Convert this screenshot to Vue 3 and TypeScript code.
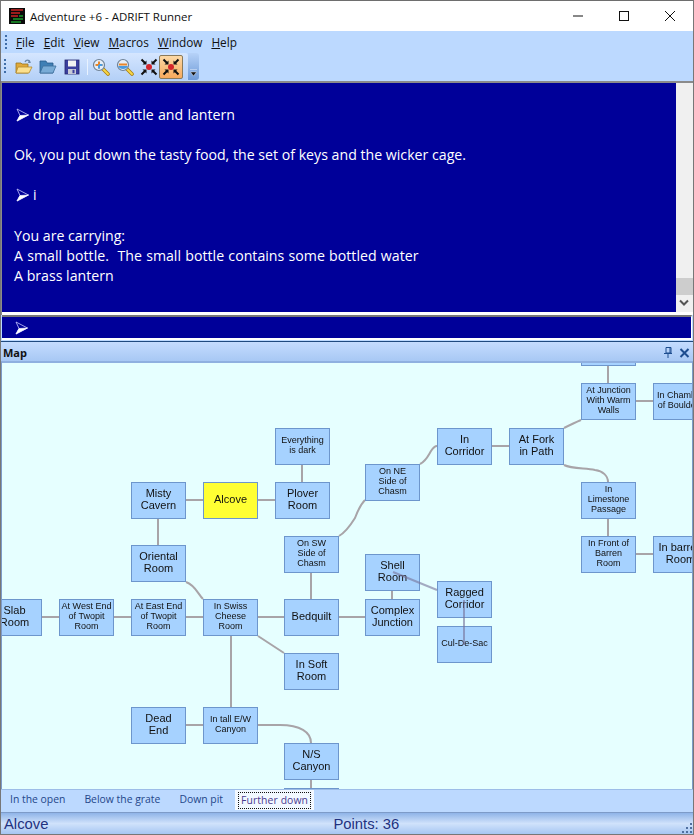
<script setup lang="ts">
interface RoomNode { x: number; y: number; t: string[]; s?: boolean; a?: boolean }
const rooms: RoomNode[] = [
  { x: 581, y: 329, t: [''] },
  { x: 581, y: 383, t: ['At Junction', 'With Warm', 'Walls'], s: true },
  { x: 653, y: 383, t: ['In Chamber', 'of Boulders'], s: true },
  { x: 275, y: 428, t: ['Everything', 'is dark'], s: true },
  { x: 437, y: 428, t: ['In', 'Corridor'] },
  { x: 509, y: 428, t: ['At Fork', 'in Path'] },
  { x: 365, y: 464, t: ['On NE', 'Side of', 'Chasm'], s: true },
  { x: 131, y: 482, t: ['Misty', 'Cavern'] },
  { x: 203, y: 482, t: ['Alcove'], a: true },
  { x: 275, y: 482, t: ['Plover', 'Room'] },
  { x: 581, y: 482, t: ['In', 'Limestone', 'Passage'], s: true },
  { x: 284, y: 536, t: ['On SW', 'Side of', 'Chasm'], s: true },
  { x: 581, y: 536, t: ['In Front of', 'Barren', 'Room'], s: true },
  { x: 653, y: 536, t: ['In barren', 'Room'] },
  { x: 131, y: 545, t: ['Oriental', 'Room'] },
  { x: 365, y: 554, t: ['Shell', 'Room'] },
  { x: 437, y: 581, t: ['Ragged', 'Corridor'] },
  { x: -13, y: 599, t: ['Slab', 'Room'] },
  { x: 59, y: 599, t: ['At West End', 'of Twopit', 'Room'], s: true },
  { x: 131, y: 599, t: ['At East End', 'of Twopit', 'Room'], s: true },
  { x: 203, y: 599, t: ['In Swiss', 'Cheese', 'Room'], s: true },
  { x: 284, y: 599, t: ['Bedquilt'] },
  { x: 365, y: 599, t: ['Complex', 'Junction'] },
  { x: 437, y: 626, t: ['Cul-De-Sac'], s: true },
  { x: 284, y: 653, t: ['In Soft', 'Room'] },
  { x: 131, y: 707, t: ['Dead', 'End'] },
  { x: 203, y: 707, t: ['In tall E/W', 'Canyon'], s: true },
  { x: 284, y: 743, t: ['N/S', 'Canyon'] },
  { x: 284, y: 788, t: [''] },
];
const OX = 2;
const OY = 363;
const links: string[] = [
  'M608 366V383', 'M636 401H653', 'M564 428C572 424 574 423 581 420',
  'M564 465C572 469 585 468 595 470C603 471 608 476 608 482', 'M492 446H509',
  'M420 464C426 461 428 456 431 451C433 448 435 446 437 446',
  'M339 536C346 532 350 526 355 518C358 510 361 504 365 500',
  'M302 465V482', 'M186 500H203', 'M258 500H275', 'M158 519V545',
  'M186 582C195 585 198 594 203 599', 'M311 573V599', 'M608 519V536', 'M636 554H653',
  'M392 591V599', 'M42 617H59', 'M114 617H131', 'M186 617H203', 'M258 617H284', 'M339 617H365',
  'M258 636L284 653', 'M231 636V707', 'M186 725H203',
  'M258 725H280C300 725 311 732 311 743', 'M311 780V788',
];
const overLinks: string[] = ['M393 572L437 590', 'M464 600V645'];
</script>

<template>
  <div class="win">
    <header class="title">
      <svg class="appicon" width="16" height="16" viewBox="0 0 16 16">
        <rect width="16" height="16" fill="#0a0a0a"/>
        <path d="M2 2H14M2 5H11M2 8H9" stroke="#c22" stroke-width="1.3"/>
        <path d="M4 11H14M2 14H12M10 8H14" stroke="#1a9a2a" stroke-width="1.3"/>
      </svg>
      <span class="title-text">Adventure +6 - ADRIFT Runner</span>
      <div class="caption">
        <svg width="46" height="30" viewBox="0 0 46 30"><path d="M18 15H28" stroke="#111"/></svg>
        <svg width="46" height="30" viewBox="0 0 46 30"><rect x="18.500" y="10.500" width="9" height="9" fill="none" stroke="#111"/></svg>
        <svg width="46" height="30" viewBox="0 0 46 30"><path d="M18 10L28 20M28 10L18 20" stroke="#111"/></svg>
      </div>
    </header>

    <div class="menubar">
      <span class="grip"></span>
      <span class="mi"><u>F</u>ile</span>
      <span class="mi"><u>E</u>dit</span>
      <span class="mi"><u>V</u>iew</span>
      <span class="mi"><u>M</u>acros</span>
      <span class="mi"><u>W</u>indow</span>
      <span class="mi"><u>H</u>elp</span>
    </div>

    <div class="toolrow">
      <div class="toolbar">
        <span class="grip"></span>
        <button class="tb">
          <svg width="18" height="18" viewBox="0 0 18 18">
            <path d="M1 5h5l1 1h6v9H1z" fill="#e0a93a" stroke="#9a7420" stroke-width=".8"/>
            <path d="M3 9h14l-3 6H1z" fill="#fbe08f" stroke="#b58a2c" stroke-width=".8"/>
            <path d="M10 4C11 1.500 14 1.500 15 4" fill="none" stroke="#6b87a8" stroke-width="1.200"/>
            <path d="M14 2l2 3-3 0z" fill="#6b87a8"/>
          </svg>
        </button>
        <button class="tb">
          <svg width="18" height="18" viewBox="0 0 18 18">
            <path d="M1 3h6l1 2h6v10H1z" fill="#3f7fb5" stroke="#2a5c8a" stroke-width=".8"/>
            <path d="M4 8h13l-3 7H1z" fill="#79abd6" stroke="#3c6f9c" stroke-width=".8"/>
          </svg>
        </button>
        <button class="tb">
          <svg width="16" height="16" viewBox="0 0 16 16">
            <rect x="1" y="1" width="14" height="14" fill="#3b3f9e" stroke="#23266e" stroke-width=".8"/>
            <rect x="4" y="1.500" width="8" height="6" fill="#f2f2f2"/>
            <rect x="4" y="10" width="8" height="5" fill="#c8cbd6"/>
            <rect x="8.500" y="10.800" width="2" height="3.400" fill="#3b3f9e"/>
          </svg>
        </button>
        <span class="sep"></span>
        <button class="tb">
          <svg width="18" height="18" viewBox="0 0 18 18">
            <path d="M10.500 10.500L16 16" stroke="#a87e10" stroke-width="3.600" stroke-linecap="round"/>
            <path d="M10.500 10.500L16 16" stroke="#f7d648" stroke-width="2" stroke-linecap="round"/>
            <circle cx="7" cy="7" r="5.500" fill="#e6eef6" stroke="#6f8296" stroke-width="1.200"/>
            <path d="M7 3.500V10.500M3.500 7H10.500" stroke="#e8862a" stroke-width="2"/>
            <path d="M7 7H10.500M7 7V10.500" stroke="#4a9be0" stroke-width="2"/>
          </svg>
        </button>
        <button class="tb">
          <svg width="18" height="18" viewBox="0 0 18 18">
            <path d="M10.500 10.500L16 16" stroke="#a87e10" stroke-width="3.600" stroke-linecap="round"/>
            <path d="M10.500 10.500L16 16" stroke="#f7d648" stroke-width="2" stroke-linecap="round"/>
            <circle cx="7" cy="7" r="5.500" fill="#e6eef6" stroke="#6f8296" stroke-width="1.200"/>
            <path d="M2.200 8H11.800C11 12 3 12 2.200 8z" fill="#4a9be0"/>
            <path d="M3 6.500H11" stroke="#e8862a" stroke-width="2"/>
          </svg>
        </button>
        <button class="tb">
          <svg width="18" height="18" viewBox="0 0 18 18">
            <circle cx="9" cy="9" r="3" fill="#d5262c"/>
            <path d="M1.500 1.500L5 5M16.500 1.500L13 5M1.500 16.500L5 13M16.500 16.500L13 13" stroke="#111" stroke-width="2"/>
            <path d="M6.500 2.500V6.500H2.500zM11.500 2.500V6.500H15.500zM6.500 15.500V11.500H2.500zM11.500 15.500V11.500H15.500z" fill="#111"/>
          </svg>
        </button>
        <button class="tb on">
          <svg width="18" height="18" viewBox="0 0 18 18">
            <circle cx="9" cy="9" r="3" fill="#d5262c"/>
            <path d="M1.500 1.500L5 5M16.500 1.500L13 5M1.500 16.500L5 13M16.500 16.500L13 13" stroke="#111" stroke-width="2"/>
            <path d="M6.500 2.500V6.500H2.500zM11.500 2.500V6.500H15.500zM6.500 15.500V11.500H2.500zM11.500 15.500V11.500H15.500z" fill="#111"/>
          </svg>
        </button>
      </div>
      <span class="overflow">
        <svg width="9" height="8" viewBox="0 0 9 8"><path d="M1 .5H8M1.500 3H7.500L4.500 7z" fill="#111" stroke="#fff" stroke-width=".4"/></svg>
      </span>
    </div>

    <section class="output">
      <div class="output-text">
        <p class="cmd wide">
          <svg class="arrow" width="13" height="14" viewBox="0 0 13 14"><path d="M1 1L12.500 7L1 13L4 7.500z" fill="#000099" stroke="#c8c8ff" stroke-width=".8"/><path d="M12.500 7L1 13L4 7.500z" fill="#fff" stroke="#fff" stroke-width=".6"/></svg>drop all but bottle and lantern
        </p>
        <p>Ok, you put down the tasty food, the set of keys and the wicker cage.</p>
        <p class="cmd">
          <svg class="arrow" width="13" height="14" viewBox="0 0 13 14"><path d="M1 1L12.500 7L1 13L4 7.500z" fill="#000099" stroke="#c8c8ff" stroke-width=".8"/><path d="M12.500 7L1 13L4 7.500z" fill="#fff" stroke="#fff" stroke-width=".6"/></svg>i
        </p>
        <p class="block">You are carrying:<br><span class="wide">A small bottle.&nbsp; The small bottle contains some bottled water</span><br>A brass lantern</p>
      </div>
      <div class="scroll">
        <span class="thumb"></span>
        <svg class="down" width="10" height="8" viewBox="0 0 10 8"><path d="M1 1.500L5 5.500L9 1.500" fill="none" stroke="#555" stroke-width="2"/></svg>
      </div>
    </section>

    <section class="input">
      <svg class="arrow" width="13" height="14" viewBox="0 0 13 14"><path d="M1 1L12.500 7L1 13L4 7.500z" fill="#000099" stroke="#c8c8ff" stroke-width=".8"/><path d="M12.500 7L1 13L4 7.500z" fill="#fff" stroke="#fff" stroke-width=".6"/></svg>
    </section>

    <section class="panel">
      <div class="panel-head">
        <strong>Map</strong>
        <svg width="10" height="11" viewBox="0 0 10 11"><path d="M3 .5H8V6H3zM1 6.500H9M5 7V11M7 1V6" fill="none" stroke="#1d4d8f"/></svg>
        <svg width="11" height="10" viewBox="0 0 11 10"><path d="M1.500 1L9.500 9M9.500 1L1.500 9" stroke="#1d4d8f" stroke-width="2"/></svg>
      </div>
      <div class="canvas">
        <svg class="wires" width="692" height="426" :viewBox="`${OX} ${OY} 692 426`">
          <path v-for="(d, i) in links" :key="i" :d="d" fill="none" stroke="#a8a4a8" stroke-width="2"/>
        </svg>
        <div
          v-for="(r, i) in rooms"
          :key="i"
          class="room"
          :class="{ small: r.s, alcove: r.a }"
          :style="{ left: r.x - OX + 'px', top: r.y - OY + 'px' }"
        >
          <span v-for="(l, j) in r.t" :key="j">{{ l }}</span>
        </div>
        <svg class="wires over" width="692" height="426" :viewBox="`${OX} ${OY} 692 426`">
          <path v-for="(d, i) in overLinks" :key="i" :d="d" fill="none" stroke="#77739a" stroke-opacity=".6" stroke-width="2"/>
        </svg>
      </div>
      <div class="tabs">
        <span class="tab">In the open</span>
        <span class="tab">Below the grate</span>
        <span class="tab">Down pit</span>
        <span class="tab active"><i>Further down</i></span>
      </div>
    </section>

    <footer class="status">
      <span class="st-l">Alcove</span>
      <span class="st-c">Points: 36</span>
      <svg class="sizer" width="12" height="12" viewBox="0 0 12 12">
        <path d="M9 1h2v2H9zM5 5h2v2H5zM9 5h2v2H9zM1 9h2v2H1zM5 9h2v2H5zM9 9h2v2H9z" fill="#4f6f9f"/>
      </svg>
    </footer>
  </div>
</template>

<style>
html, body { margin: 0; background: #fff; }
</style>

<style scoped>
.win {
  width: 694px;
  height: 835px;
  box-sizing: border-box;
  border: 1px solid #777;
  border-top-color: #6e6e6e;
  display: flex;
  flex-direction: column;
  background: #bcd9ff;
  font-family: "Open Sans", "Noto Sans", sans-serif;
  overflow: hidden;
}
.title {
  height: 30px;
  flex: none;
  background: #fff;
  display: flex;
  align-items: center;
  padding-left: 8px;
}
.appicon { margin-right: 5px; }
.title-text { font-size: 11.500px; color: #111; }
.caption { margin-left: auto; display: flex; }
.menubar {
  height: 22px;
  flex: none;
  display: flex;
  align-items: center;
  padding-left: 4px;
  font-size: 11.800px;
  color: #111;
}
.grip {
  width: 2px;
  height: 14px;
  margin-right: 9px;
  background-image: linear-gradient(#3f6da8 50%, transparent 50%);
  background-size: 2px 4px;
}
.mi { margin-right: 9px; }
.toolrow { height: 28px; flex: none; display: flex; align-items: stretch; }
.toolbar {
  display: flex;
  align-items: center;
  padding-left: 3px;
  height: 27px;
  width: 187px;
  box-sizing: border-box;
  border-radius: 0 3px 3px 0;
  background: linear-gradient(#d5e6ff, #b4d0f7);
}
.toolbar .grip { margin-right: 6px; height: 16px; }
.tb {
  width: 23px;
  height: 24px;
  padding: 0;
  border: 1px solid transparent;
  border-radius: 2px;
  background: none;
  display: flex;
  align-items: center;
  justify-content: center;
  margin-right: 1px;
}
.tb.on {
  width: 24px;
  background: linear-gradient(#fcd9a6, #f7a95c);
  border-color: #8a7a5a;
  margin-left: -2px;
}
.sep { width: 1px; height: 16px; background: #e8f2ff; margin: 0 1px 0 3px; }
.overflow {
  width: 11px;
  height: 27px;
  background: linear-gradient(#b6d2f8, #6f9bd8);
  border-radius: 0 3px 3px 0;
  display: flex;
  align-items: flex-end;
  justify-content: center;
  padding-bottom: 3px;
  box-sizing: border-box;
}
.output {
  height: 234px;
  flex: none;
  display: flex;
  border-top: 2px solid #8b8b8b;
  border-left: 1px solid #8b8b8b;
  background: #fff;
  box-sizing: border-box;
  padding-bottom: 3px;
}
.output-text {
  flex: 1;
  background: #000099;
  color: #fff;
  font-size: 14.170px;
  line-height: 20px;
  padding: 22px 0 0 12px;
}
.output-text p { margin: 0 0 20px; }
.output-text .block { line-height: 20px; margin-top: 21px; }
.wide { word-spacing: .6px; }
.arrow { margin: 0 4px 0 2px; vertical-align: -2px; }
.scroll {
  width: 17px;
  background: #f0f0f0;
  position: relative;
}
.thumb { position: absolute; left: 0; right: 0; top: 195px; height: 17px; background: #cdcdcd; }
.down { position: absolute; left: 3px; bottom: 5px; }
.input {
  height: 25px;
  flex: none;
  box-sizing: border-box;
  margin-left: 1px;
  margin-right: 1px;
  border-top: 2px solid #777;
  border-bottom: 2px solid #fff;
  background: #000099;
  color: #fff;
  padding-left: 11px;
  line-height: 20px;
  border-right: 1px solid #fff;
}
.panel {
  flex: 1;
  min-height: 0;
  display: flex;
  flex-direction: column;
  margin-top: 1px;
  border-top: 1px solid #1f4a80;
}
.panel-head {
  height: 19px;
  flex: none;
  display: flex;
  align-items: center;
  gap: 6px;
  padding: 2px 3px 0 2px;
  box-sizing: border-box;
  background: linear-gradient(#c4dcff, #a8c8f4);
  font-size: 11px;
  color: #111;
}
.panel-head strong { margin-right: auto; font-weight: 700; }
.canvas {
  position: relative;
  height: 426px;
  flex: none;
  background: #e6ffff;
  overflow: hidden;
  border-top: 2px solid #8fb0e0;
  border-left: 1px solid #7d9bc8;
  border-right: 1px solid #7d9bc8;
  box-sizing: content-box;
}
.wires { position: absolute; left: 0; top: 0; filter: blur(.25px); }
.wires.over { pointer-events: none; }
.room {
  position: absolute;
  width: 55px;
  height: 37px;
  box-sizing: border-box;
  border: 1px solid #6d96cc;
  background: #a6d2ff;
  display: flex;
  flex-direction: column;
  align-items: center;
  justify-content: center;
  padding-bottom: 4px;
  font-family: "Liberation Sans", sans-serif;
  font-size: 11px;
  line-height: 12px;
  color: #111;
  white-space: nowrap;
  overflow: hidden;
  filter: blur(.3px);
}
.room.small { font-size: 9px; line-height: 10px; }
.room.alcove { background: #ffff33; font-size: 11px; }
.tabs {
  height: 22px;
  flex: none;
  display: flex;
  align-items: flex-start;
  box-sizing: border-box;
  font-size: 10.400px;
  line-height: 19px;
  color: #24478a;
  background: #bcd9ff;
  border-top: 1px solid #9dbde8;
}
.tab { padding: 0 9px; margin-right: 1px; }
.tab.active {
  background: #f2f8ff;
  height: 20px;
  display: flex;
  align-items: center;
  padding: 0 3px;
  margin-left: 2px;
}
.tab.active i {
  font-style: normal;
  border: 1px dotted #111;
  padding: 1px 2px;
  line-height: 13px;
  letter-spacing: .1px;
  color: #4a3a8f;
}
.status {
  height: 22px;
  flex: none;
  display: flex;
  align-items: center;
  background: linear-gradient(#8fb4e8, #d0e2fb 50%, #a6c6f2);
  border-top: 1px solid #7d9bc8;
  color: #22317f;
  font-family: "Liberation Sans", sans-serif;
  font-size: 14.800px;
  padding: 1px 0 0 3px;
  box-sizing: border-box;
  position: relative;
}
.st-c { margin-left: 285px; }
.sizer { position: absolute; right: 0; bottom: 0; }
</style>
